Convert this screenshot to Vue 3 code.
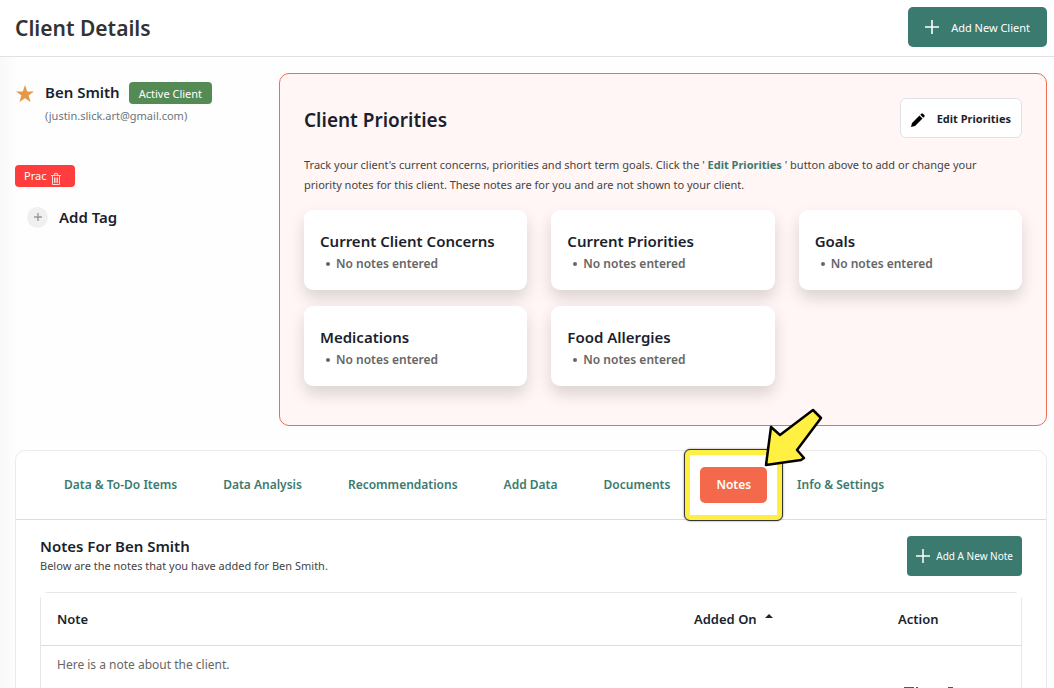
<script setup>
const cards = ['Current Client Concerns', 'Current Priorities', 'Goals', 'Medications', 'Food Allergies']
const tabs = ['Data & To-Do Items', 'Data Analysis', 'Recommendations', 'Add Data', 'Documents', 'Notes', 'Info & Settings']
const active = 'Notes'
</script>

<template>
  <div class="page">
    <header class="topbar">
      <h1>Client Details</h1>
      <button class="primary" type="button">
        <svg width="14" height="14" viewBox="0 0 14 14"><path d="M7 0v14M0 7h14" stroke="#fff" stroke-width="1.6" /></svg>
        <span>Add New Client</span>
      </button>
    </header>

    <main>
      <div class="overview">
        <aside>
          <div class="person">
            <svg class="star" width="20" height="20" viewBox="0 0 20 20"><path d="M10 1l2.2 6.4 6.8.1-5.400 4.100 2 6.500-5.600-3.900-5.600 3.900 2-6.500L1 7.500l6.800-.1z" fill="#e5984a" /></svg>
            <div>
              <div class="nameline"><h2>Ben Smith</h2><span class="badge">Active Client</span></div>
              <div class="mail">(justin.slick.art@gmail.com)</div>
            </div>
          </div>
          <div class="tag">
            <span>Prac</span>
            <button type="button" aria-label="Remove tag">
              <svg width="10" height="12" viewBox="0 0 10 12" fill="none" stroke="#ffd5d5"><path d="M0 2.500h10M3.500 2V.5h3V2M1.500 3v8.500h7V3M3.500 4.500v5.500M5 4.500v5.500M6.500 4.500v5.500" stroke-width="1" /></svg>
            </button>
          </div>
          <button class="addtag" type="button">
            <span class="circle"><svg width="8" height="8" viewBox="0 0 8 8"><path d="M4 0v8M0 4h8" stroke="#999" stroke-width="1.400" /></svg></span>
            <span>Add Tag</span>
          </button>
        </aside>

        <section class="priorities">
          <div class="phead">
            <h2>Client Priorities</h2>
            <button class="edit" type="button">
              <svg width="14" height="14" viewBox="0 0 14 14"><path d="M0 14l1-4 7.500-7.500 3 3L4 13zM9.300 1.700l1-1q.8-.8 1.600 0l1.400 1.400q.8.8 0 1.600l-1 1z" /></svg>
              <span>Edit Priorities</span>
            </button>
          </div>
          <p>Track your client's current concerns, priorities and short term goals. Click the ' <b>Edit Priorities</b> ' button above to add or change your priority notes for this client. These notes are for you and are not shown to your client.</p>
          <div class="cards">
            <article v-for="card in cards" :key="card">
              <h3>{{ card }}</h3>
              <ul><li>No notes entered</li></ul>
            </article>
          </div>
        </section>
      </div>

      <section class="panel">
        <nav>
          <div v-for="tab in tabs" :key="tab" class="tab" :class="{ active: tab === active }">
            <a href="#">{{ tab }}</a>
            <template v-if="tab === active">
              <span class="highlight"></span>
              <svg class="arrow" width="62" height="62" viewBox="0 0 62 62"><path d="M4 57L9 19l9 8L51 2l8 8-24 32 7 8-3 2z" fill="#fff042" stroke="#000" stroke-width="2.500" stroke-linejoin="round" /></svg>
            </template>
          </div>
        </nav>
        <div class="body">
          <div class="nhead">
            <div>
              <h3>Notes For Ben Smith</h3>
              <div class="sub">Below are the notes that you have added for Ben Smith.</div>
            </div>
            <button class="primary small" type="button">
              <svg width="14" height="14" viewBox="0 0 14 14"><path d="M7 0v14M0 7h14" stroke="#fff" stroke-width="1.500" /></svg>
              <span>Add A New Note</span>
            </button>
          </div>
          <div class="tablewrap">
            <table>
              <thead>
                <tr>
                  <th class="note">Note</th>
                  <th class="added">Added On <svg width="8" height="4" viewBox="0 0 8 4"><path d="M0 4l4-4 4 4z" fill="#212529" /></svg></th>
                  <th>Action</th>
                </tr>
              </thead>
              <tbody>
                <tr>
                  <td>Here is a note about the client.</td>
                  <td></td>
                  <td class="actions">
                    <button type="button" aria-label="Delete note"><svg width="16" height="18" viewBox="0 0 16 18" fill="none" stroke="#555"><path d="M0 .5h10M12 .5h2M3 3v14h10V3" /></svg></button>
                    <button type="button" aria-label="Edit note"><svg width="16" height="18" viewBox="0 0 16 18" fill="none" stroke="#555"><path d="M6 .5h5M5 2l-3 10v5l4-3 5-12" /></svg></button>
                  </td>
                </tr>
              </tbody>
            </table>
          </div>
        </div>
      </section>
    </main>
  </div>
</template>

<style>
body { margin: 0; overflow: hidden; }
</style>

<style scoped>
* { box-sizing: border-box; }
.page { height: 100vh; overflow: hidden; background: #fefefe; color: #1b1f2e; font: 12px/20px "Noto Sans", "Open Sans", sans-serif; }
h1, h2, h3, p, ul { margin: 0; padding: 0; font-weight: 600; }
button { font-family: inherit; cursor: pointer; border: 0; padding: 0; background: none; color: inherit; }
svg { display: block; flex: none; }
.topbar { display: flex; align-items: center; justify-content: space-between; height: 57px; padding: 0 7px 2px 15px; background: #fff; border-bottom: 1px solid #dee2e6; }
h1 { padding-top: 2px; font-size: 21px; line-height: 28px; color: #333; }
.primary { display: flex; align-items: center; gap: 12px; height: 40px; padding: 0 17px; border-radius: 5px; background: #3b7a6f; color: #fff; font-size: 11px; }
.primary.small { gap: 6px; font-size: 10px; padding: 0 9px; border-radius: 4px; }
main { padding: 16px 7px 0 15px; background: linear-gradient(90deg, #f9f9f9, #fefefe 20px); }
.overview { display: flex; }
aside { flex: 0 0 264px; padding-top: 8px; }
.person { display: flex; gap: 10px; }
.star { margin-top: 3px; }
.nameline { display: flex; align-items: flex-start; gap: 9px; }
.nameline h2 { font-size: 15px; line-height: 22px; }
.badge { height: 22px; padding: 0 10px; margin-top: 1px; border-radius: 4px; background: #548b54; color: #fff; font-size: 11px; line-height: 23px; }
.mail { margin-top: 3px; line-height: 18px; font-size: 11px; color: #6c757d; }
.tag { display: inline-flex; align-items: center; gap: 5px; height: 22px; margin-top: 40px; padding: 0 14px 0 9px; border-radius: 4px; background: #ff3d3d; color: #fff; font-size: 11px; }
.tag button { padding-top: 6px; }
.addtag { display: flex; align-items: center; gap: 11px; margin: 18px 0 0 12px; font-size: 15px; line-height: 24px; font-weight: 600; }
.circle { display: grid; place-items: center; width: 21px; height: 21px; border-radius: 50%; background: #f0f0f0; }
.priorities { flex: 1; min-width: 0; padding: 24px 24px 39px; border: 1px solid #f16c50; border-radius: 10px; background: #fff6f5; }
.phead { display: flex; justify-content: space-between; }
.phead h2 { font-size: 19px; line-height: 44px; }
.edit { display: flex; align-items: center; gap: 12px; height: 40px; padding: 0 10px; border: 1px solid #dee2e6; border-radius: 6px; background: #fff; font-size: 11px; font-weight: 700; }
.edit svg { margin-top: 3px; }
.priorities p { margin: 13px 0 15px; padding-right: 16px; font-weight: 400; font-size: 11px; color: #444; }
.priorities b { color: #3b7a6f; }
.cards { display: grid; grid-template-columns: repeat(3, 1fr); gap: 16px 24px; }
article { padding: 19px 16px 15px; border-radius: 9px; background: #fff; box-shadow: 0 8px 16px rgba(0, 0, 0, .15); }
article h3 { font-size: 15px; line-height: 24px; }
article ul { padding-left: 6px; font-size: 12px; line-height: 22px; color: #666; list-style: none; }
article li { display: flex; align-items: center; gap: 6px; }
article li::before { content: ""; width: 4px; height: 4px; border-radius: 50%; background: #666; }
.panel { margin-top: 24px; height: 300px; border: 1px solid #ebebeb; border-radius: 10px; background: #fff; }
nav { display: flex; align-items: center; gap: 14px; height: 69px; padding: 0 32px; border-bottom: 1px solid #ddd; }
.tab { position: relative; }
.tab a { display: block; padding: 0 16px; border-radius: 5px; line-height: 36px; font-size: 12px; font-weight: 600; color: #3b7a6f; text-decoration: none; white-space: nowrap; }
.tab.active a { background: #f4694b; color: #fff; }
.highlight { position: absolute; inset: -17px -15px; border: 5px solid #ffef42; border-radius: 5px; outline: 1px solid #333; box-shadow: 0 0 3px #000; }
.arrow { position: absolute; left: 62px; top: -59px; }
.body { padding: 16px 24px; }
.nhead { display: flex; justify-content: space-between; }
.nhead h3 { font-size: 15px; line-height: 20px; }
.sub { font-size: 11px; line-height: 20px; color: #444; }
.tablewrap { margin-top: 16px; height: 240px; border: 1px solid #e6e6e6; border-radius: 8px; }
table { width: 100%; border-collapse: collapse; table-layout: fixed; font-size: 12px; }
th { height: 52px; padding: 0 16px; text-align: left; font-size: 13px; font-weight: 600; background: #fff; border-bottom: 1px solid #ddd; }
.note { width: 65%; }
.added { width: 204px; }
th svg { display: inline-block; margin: 0 0 6px 5px; }
td { padding: 9px 16px; vertical-align: top; color: #666; }
.actions { display: flex; gap: 22px; padding-top: 41px; padding-left: 22px; }
</style>
